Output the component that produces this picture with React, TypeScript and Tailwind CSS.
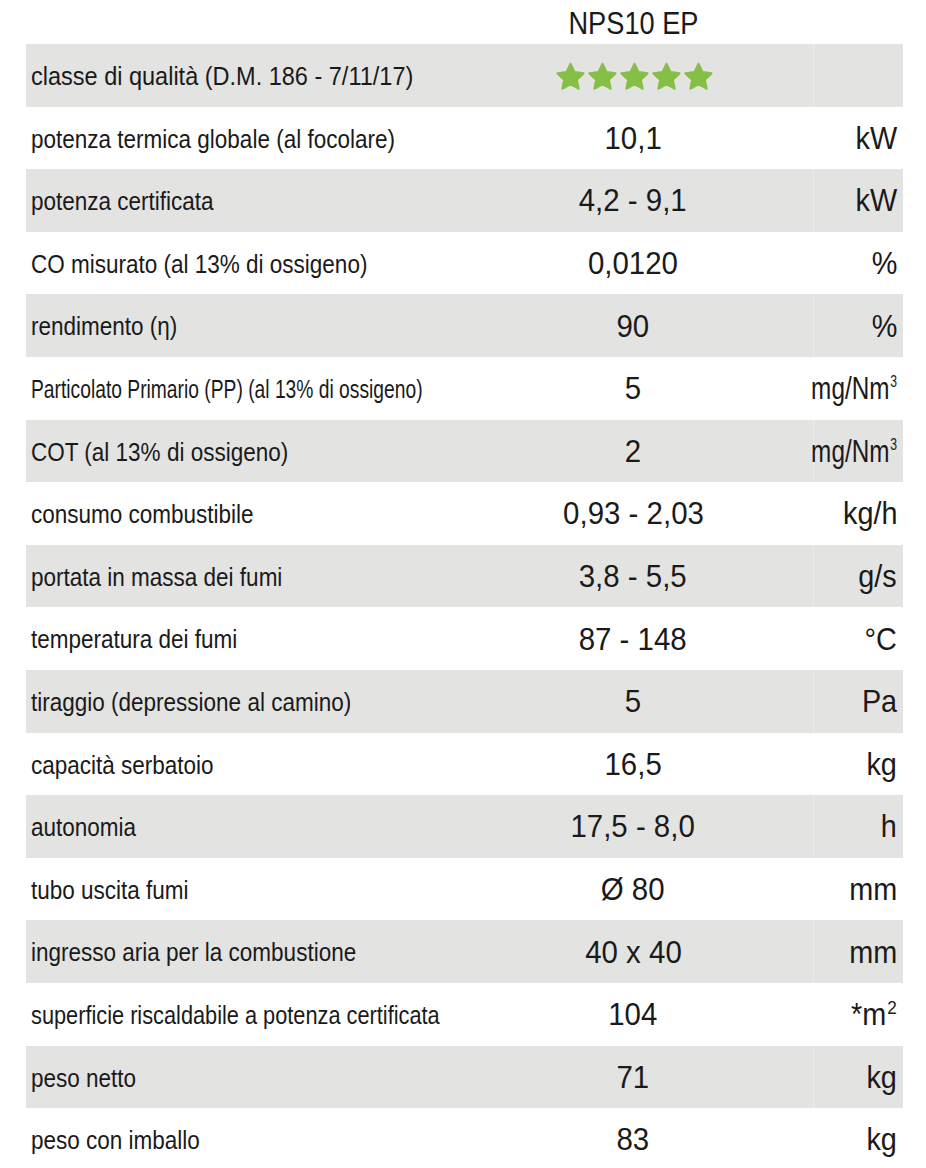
import React from 'react'

// sx: horizontal squeeze for the label (the original uses a condensed face)
const rows = [
  { label: 'classe di qualità (D.M. 186 - 7/11/17)', value: 'stars', unit: '', sx: 'scale-x-[0.94]' },
  { label: 'potenza termica globale (al focolare)', value: '10,1', unit: 'kW' },
  { label: 'potenza certificata', value: '4,2 - 9,1', unit: 'kW' },
  { label: 'CO misurato (al 13% di ossigeno)', value: '0,0120', unit: '%' },
  { label: 'rendimento (η)', value: '90', unit: '%' },
  { label: 'Particolato Primario (PP) (al 13% di ossigeno)', value: '5', unit: 'mg3', sx: 'scale-x-[0.77]' },
  { label: 'COT (al 13% di ossigeno)', value: '2', unit: 'mg3' },
  { label: 'consumo combustibile', value: '0,93 - 2,03', unit: 'kg/h' },
  { label: 'portata in massa dei fumi', value: '3,8 - 5,5', unit: 'g/s' },
  { label: 'temperatura dei fumi', value: '87 - 148', unit: '°C' },
  { label: 'tiraggio (depressione al camino)', value: '5', unit: 'Pa' },
  { label: 'capacità serbatoio', value: '16,5', unit: 'kg' },
  { label: 'autonomia', value: '17,5 - 8,0', unit: 'h' },
  { label: 'tubo uscita fumi', value: 'Ø 80', unit: 'mm' },
  { label: 'ingresso aria per la combustione', value: '40 x 40', unit: 'mm' },
  { label: 'superficie riscaldabile a potenza certificata', value: '104', unit: 'm2', sx: 'scale-x-[0.87]' },
  { label: 'peso netto', value: '71', unit: 'kg' },
  { label: 'peso con imballo', value: '83', unit: 'kg' },
]

function Star() {
  return (
    <svg width="31" height="29" viewBox="0 0 24 23">
      <path
        d="M12 1.5l3.1 6.6 7.2.9-5.3 5 1.4 7.1L12 17.6l-6.4 3.5 1.4-7.1-5.3-5 7.2-.9z"
        fill="#86bf45"
        stroke="#86bf45"
        strokeWidth="1.8"
        strokeLinejoin="round"
      />
    </svg>
  )
}

function Unit({ u }: { u: string }) {
  if (u === 'mg3') return <span>mg/Nm<sup className="text-[16px] -top-[12px] ml-[1px]">3</sup></span>
  if (u === 'm2') return <span>*m<sup className="text-[19px] -top-[11px] ml-[1px]">2</sup></span>
  return <span>{u}</span>
}

export default function App() {
  return (
    <div className="w-[926px] h-[1168px] bg-white text-[#1a1a1a] overflow-hidden" style={{ fontFamily: '"Liberation Sans", Arial, sans-serif' }}>
      <div className="ml-[26px] w-[877px]">
        {/* header */}
        <div className="flex h-[44px] items-center">
          <div className="w-[427px]" />
          <div className="w-[360px] text-center text-[32px] pt-[2px]">
            <span className="inline-block scale-x-[0.85]">NPS10 EP</span>
          </div>
        </div>
        {rows.map((r, i) => (
          <div key={i} className={`flex h-[62.6px] items-center ${i % 2 === 0 ? 'bg-[#e3e3e2]' : 'bg-white'}`}>
            <div className="w-[427px] pl-[5px] pt-[3px] text-[25px] whitespace-nowrap">
              <span className={`inline-block origin-left ${r.sx ?? 'scale-x-[0.9]'}`}>{r.label}</span>
            </div>
            <div className="w-[360px] h-full flex items-center justify-center text-[32px]">
              {r.value === 'stars' ? (
                <div className="flex gap-[1px] mt-[2px] ml-[2px]">
                  <Star /><Star /><Star /><Star /><Star />
                </div>
              ) : (
                <span className="inline-block scale-x-[0.92]">{r.value}</span>
              )}
            </div>
            <div className={`w-[90px] h-full flex items-center justify-end pr-[6px] text-[32px] border-l ${i % 2 === 0 ? 'border-[#ececeb]' : 'border-white'}`}>
              <span className={`inline-block origin-right whitespace-nowrap ${r.unit === 'mg3' ? 'scale-x-[0.76]' : 'scale-x-[0.9]'}`}>
                <Unit u={r.unit} />
              </span>
            </div>
          </div>
        ))}
      </div>
    </div>
  )
}
